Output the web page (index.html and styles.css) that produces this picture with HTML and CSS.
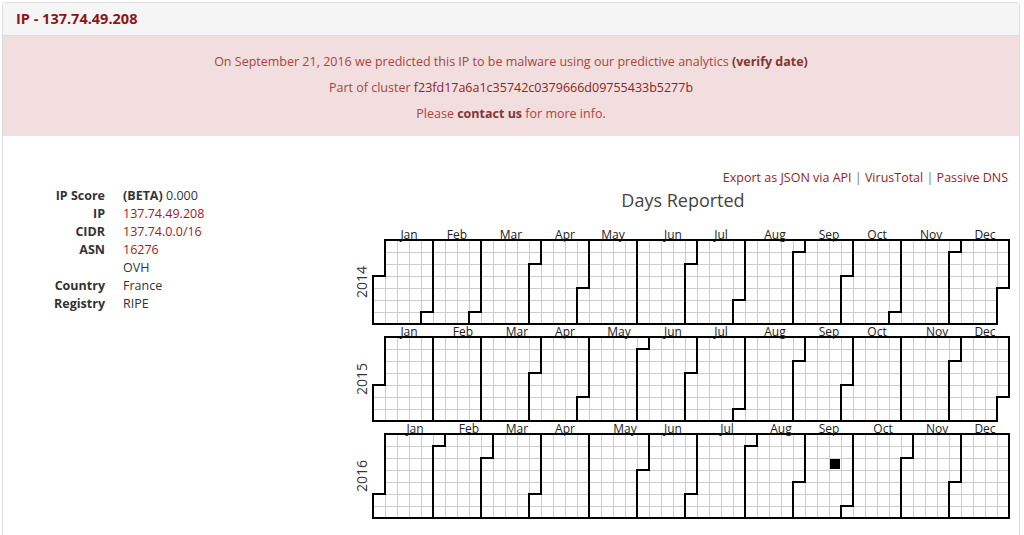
FILE: index.html
```html
<!DOCTYPE html>
<html lang="en">
<head>
  <meta charset="UTF-8" />
  <title>IP - 137.74.49.208</title>
  <link rel="stylesheet" href="styles.css">
</head>
<body>
  <div class="panel">
    <div class="panel-heading">IP - 137.74.49.208</div>
    <div class="alert">
      <p>On September 21, 2016 we predicted this IP to be malware using our predictive analytics <a class="alert-link" href="#">(verify date)</a></p>
      <p>Part of cluster <a class="cluster" href="#">f23fd17a6a1c35742c0379666d09755433b5277b</a></p>
      <p>Please <a class="alert-link" href="#">contact us</a> for more info.</p>
    </div>
    <div class="panel-body">
      <div class="col-info">
        <dl class="info">
          <dt>IP Score</dt><dd><b>(BETA)</b> 0.000</dd>
          <dt>IP</dt><dd><a href="#">137.74.49.208</a></dd>
          <dt>CIDR</dt><dd><a href="#">137.74.0.0/16</a></dd>
          <dt>ASN</dt><dd><a href="#">16276</a></dd>
          <dt></dt><dd>OVH</dd>
          <dt>Country</dt><dd>France</dd>
          <dt>Registry</dt><dd>RIPE</dd>
        </dl>
      </div>
      <div class="col-cal">
        <div class="links">
          <a href="#">Export as JSON via API</a> | <a href="#">VirusTotal</a> | <a href="#">Passive DNS</a>
        </div>
        <h3 class="cal-title">Days Reported</h3>
        <svg id="calendar" class="calendar" width="672" height="300"></svg>
      </div>
    </div>
  </div>

  <script>
    var cellSize = 12, offsetX = 26, offsetY = 17, yearHeight = 97;
    var years = [2014, 2015, 2016];
    var reported = [Date.UTC(2016, 8, 20)];
    var months = ["Jan", "Feb", "Mar", "Apr", "May", "Jun", "Jul", "Aug", "Sep", "Oct", "Nov", "Dec"];
    var NS = "http://www.w3.org/2000/svg";
    var svg = document.getElementById("calendar");

    function el(name, attrs, parent) {
      var node = document.createElementNS(NS, name);
      for (var k in attrs) node.setAttribute(k, attrs[k]);
      parent.appendChild(node);
      return node;
    }
    function week(t) {
      var y0 = Date.UTC(new Date(t).getUTCFullYear(), 0, 1);
      var doy = Math.round((t - y0) / 864e5);
      return Math.floor((doy + new Date(y0).getUTCDay()) / 7);
    }
    function monthPath(t0) {
      var d = new Date(t0);
      var t1 = Date.UTC(d.getUTCFullYear(), d.getUTCMonth() + 1, 0);
      var d0 = d.getUTCDay(), w0 = week(t0),
          d1 = new Date(t1).getUTCDay(), w1 = week(t1);
      return "M" + (w0 + 1) * cellSize + "," + d0 * cellSize +
        "H" + w0 * cellSize + "V" + 7 * cellSize +
        "H" + w1 * cellSize + "V" + (d1 + 1) * cellSize +
        "H" + (w1 + 1) * cellSize + "V0" +
        "H" + (w0 + 1) * cellSize + "Z";
    }

    years.forEach(function (year, i) {
      var g = el("g", { transform: "translate(" + offsetX + "," + (offsetY + i * yearHeight) + ")" }, svg);
      var label = el("text", { "class": "year-label", transform: "translate(-6," + cellSize * 3.5 + ")rotate(-90)" }, g);
      label.textContent = year;

      var days = el("g", { "class": "days" }, g);
      for (var t = Date.UTC(year, 0, 1); t < Date.UTC(year + 1, 0, 1); t += 864e5) {
        var x = week(t) * cellSize, y = new Date(t).getUTCDay() * cellSize;
        el("rect", { "class": "day", x: x, y: y, width: cellSize, height: cellSize }, days);
        if (reported.indexOf(t) >= 0) {
          el("rect", { "class": "hit", x: x + 1, y: y + 1, width: cellSize - 2, height: cellSize - 2 }, days);
        }
      }

      for (var m = 0; m < 12; m++) {
        var t0 = Date.UTC(year, m, 1), t1 = Date.UTC(year, m + 1, 0);
        el("path", { "class": "month", d: monthPath(t0) }, g);
        var txt = el("text", { "class": "month-label", x: (week(t0) + week(t1)) / 2 * cellSize + cellSize, y: -1 }, g);
        txt.textContent = months[m];
      }
    });
  </script>
</body>
</html>
```

FILE: styles.css
```css
html, body {
  overflow: hidden;
}
body {
  font-family: "Open Sans", Arial, sans-serif;
  font-size: 12.5px;
  color: #333;
  background-color: #fff;
  margin: 0;
}
a {
  color: #9e1b1e;
  text-decoration: none;
}
.panel {
  margin: 2px 4px 0 2px;
  border: 1px solid #ddd;
  border-radius: 4px;
}
.panel-heading {
  background-color: #f5f5f5;
  border-bottom: 1px solid #ddd;
  border-radius: 3px 3px 0 0;
  height: 32px;
  line-height: 32px;
  padding: 0 13px;
  color: #8c1515;
  font-weight: 700;
  font-size: 14.5px;
}
.alert {
  background-color: #f2dede;
  color: #a94442;
  text-align: center;
  padding: 17px 0 13px;
}
.alert p {
  margin: 0 0 8px;
  line-height: 18px;
}
.alert p:last-child {
  margin-bottom: 0;
}
.alert-link {
  color: #843534;
  font-weight: 700;
}
.cluster {
  color: #8a2424;
}
.panel-body {
  display: flex;
  padding: 33px 0 16px;
}
.col-info {
  width: 344px;
  flex: none;
}
.info {
  display: grid;
  grid-template-columns: 90px auto;
  column-gap: 18px;
  margin: 18px 0 0 12px;
  line-height: 18px;
}
.info dt {
  font-weight: 700;
  text-align: right;
}
.info dd {
  margin: 0;
}
.col-cal {
  flex: 1;
}
.links {
  text-align: right;
  line-height: 18px;
  padding-right: 11px;
  color: #777;
}
.cal-title {
  margin: 2px 0 12px;
  text-align: center;
  font-size: 18px;
  line-height: 22px;
  font-weight: 400;
  color: #444;
}
.calendar {
  display: block;
}
.year-label {
  font-size: 14px;
  fill: #333;
  text-anchor: middle;
}
.month-label {
  font-size: 12px;
  fill: #222;
  text-anchor: middle;
}
.day {
  fill: #fff;
  stroke: #ccc;
  stroke-width: 1;
  shape-rendering: crispEdges;
}
.hit {
  fill: #000;
}
.month {
  fill: none;
  stroke: #000;
  stroke-width: 2;
}
```
